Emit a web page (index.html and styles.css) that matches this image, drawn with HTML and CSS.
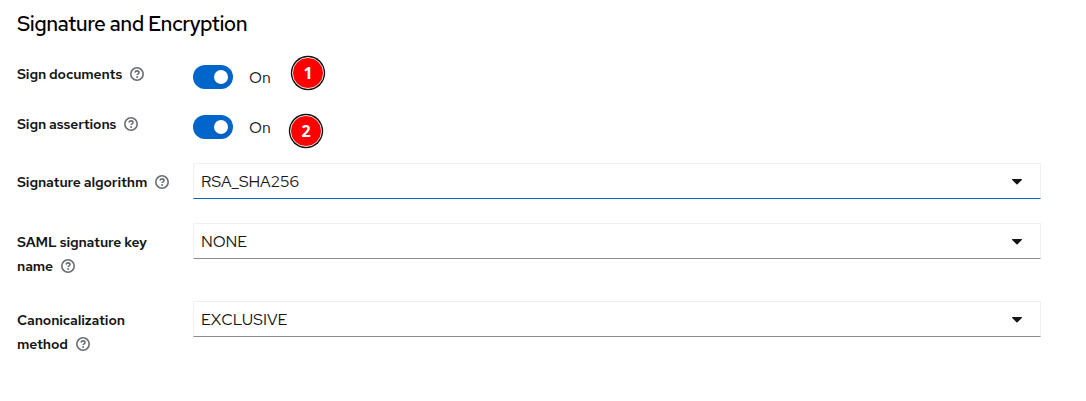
FILE: index.html
```html
<!DOCTYPE html>
<html lang="en">
  <head>
    <meta charset="UTF-8" />
    <meta name="viewport" content="width=device-width, initial-scale=1.0" />
    <title>Signature and Encryption</title>
    <link rel="stylesheet" href="styles.css">
  </head>
  <body>
    <svg class="defs" aria-hidden="true">
      <symbol id="help" viewBox="0 0 14 14">
        <circle cx="7" cy="7" r="6.2" fill="none" stroke="currentColor" stroke-width="1.6" />
        <path d="M5 5.5C5.3 4.3 6 3.9 7 3.9c1.2 0 2 .7 2 1.6C9 6.8 7.1 6.8 7.1 8.1" fill="none" stroke="currentColor" stroke-width="1.6" />
        <circle cx="7.1" cy="9.9" r="1" fill="currentColor" />
      </symbol>
      <symbol id="caret" viewBox="0 0 10 6">
        <path d="M.6 0h8.8c.6 0 .8.6.4 1L5.5 5.3a.7.7 0 0 1-1 0L.2 1C-.2.6 0 0 .6 0z" fill="currentColor" />
      </symbol>
    </svg>

    <h1 class="title">Signature and Encryption</h1>

    <form class="form">
      <div class="row row-switch">
        <div class="label">Sign documents<svg class="help"><use href="#help" /></svg></div>
        <div class="control">
          <span class="switch"></span>
          <span class="state">On</span>
          <span class="marker marker-1">1</span>
        </div>
      </div>

      <div class="row row-switch row-assertions">
        <div class="label">Sign assertions<svg class="help"><use href="#help" /></svg></div>
        <div class="control">
          <span class="switch"></span>
          <span class="state">On</span>
          <span class="marker marker-2">2</span>
        </div>
      </div>

      <div class="row">
        <div class="label">Signature algorithm<svg class="help"><use href="#help" /></svg></div>
        <div class="select focused">RSA_SHA256<svg class="caret"><use href="#caret" /></svg></div>
      </div>

      <div class="row row-tall">
        <div class="label">SAML signature key<br>name<svg class="help"><use href="#help" /></svg></div>
        <div class="select">NONE<svg class="caret"><use href="#caret" /></svg></div>
      </div>

      <div class="row row-tall">
        <div class="label">Canonicalization<br>method<svg class="help"><use href="#help" /></svg></div>
        <div class="select">EXCLUSIVE<svg class="caret"><use href="#caret" /></svg></div>
      </div>
    </form>
  </body>
</html>
```
FILE: styles.css
```css
* {
  margin: 0;
  padding: 0;
  box-sizing: border-box;
}

body {
  font-family: "Red Hat Text", Inter, "Open Sans", sans-serif;
  font-size: 16px;
  line-height: 24px;
  color: #151515;
  background-color: #fff;
  padding: 9px 45px 0 17px;
}

.defs {
  position: absolute;
  width: 0;
  height: 0;
}

.title {
  font-size: 21px;
  font-weight: 500;
  line-height: 30px;
  letter-spacing: -0.55px;
  color: #000;
  margin-bottom: 23px;
}

.form {
  display: grid;
  row-gap: 24px;
}

.row {
  display: grid;
  grid-template-columns: 176px 848px;
  align-items: start;
}

.row-switch {
  height: 26px;
}

.row-assertions {
  height: 27px;
}

.row-tall {
  height: 54px;
}

.label {
  padding-top: 7px;
  font-size: 14px;
  font-weight: 600;
  letter-spacing: -0.12px;
  white-space: nowrap;
}

.row-switch .label {
  padding-top: 0;
}

.help {
  width: 14px;
  height: 14px;
  margin-left: 8px;
  vertical-align: -2px;
  color: #6a6e73;
}

.control {
  position: relative;
  display: flex;
  align-items: center;
  padding-top: 3px;
}

.switch {
  width: 40px;
  height: 24px;
  padding: 5px;
  border-radius: 12px;
  background-color: #06c;
}

.switch::after {
  content: "";
  display: block;
  width: 14px;
  height: 14px;
  margin-left: 16px;
  border-radius: 50%;
  background-color: #fff;
  box-shadow: 0 2px 4px rgba(3, 3, 3, 0.12);
}

.state {
  margin: 2px 0 0 16px;
  line-height: 22px;
}

/* numbered callouts over the form */
.marker {
  position: absolute;
  width: 32px;
  height: 32px;
  border: 1px solid #ddd;
  border-radius: 50%;
  background-color: #f00;
  box-shadow: 0 0 0 1.2px #111;
  color: #fff;
  font-family: "Noto Sans", sans-serif;
  font-size: 16px;
  font-weight: 700;
  line-height: 30px;
  text-align: center;
}

.marker-1 {
  top: -5px;
  left: 99px;
}

.marker-2 {
  top: 3px;
  left: 97px;
}

.select {
  display: flex;
  align-items: center;
  justify-content: space-between;
  height: 36px;
  padding: 1px 18px 0 7px;
  border: 1px solid #f0f0f0;
  border-bottom-color: #8a8d90;
  letter-spacing: -0.1px;
}

.select.focused {
  border-bottom-color: #06c;
}

.caret {
  width: 10px;
  height: 6px;
}
```
